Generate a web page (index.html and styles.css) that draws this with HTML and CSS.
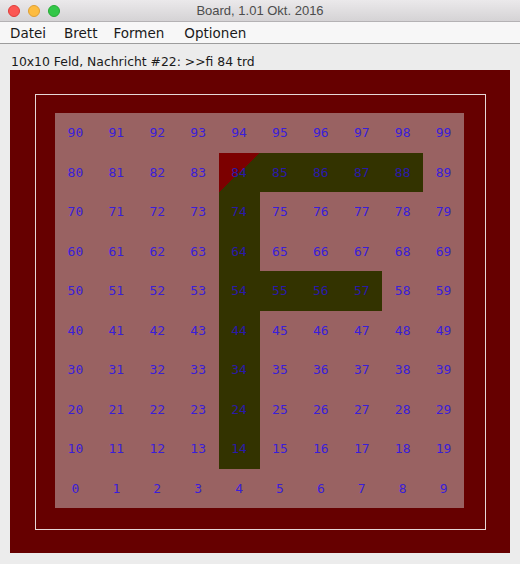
FILE: index.html
```html
<!DOCTYPE html>
<html>
<head>
<meta charset="utf-8">
<link rel="stylesheet" href="styles.css">
</head>
<body>
<div class="window">
  <div class="titlebar">
    <div class="lights">
      <span class="light red"></span>
      <span class="light yellow"></span>
      <span class="light green"></span>
    </div>
    <div class="title">Board, 1.01 Okt. 2016</div>
  </div>
  <div class="menubar">
    <span class="menu m1">Datei</span>
    <span class="menu m2">Brett</span>
    <span class="menu m3">Formen</span>
    <span class="menu m4">Optionen</span>
  </div>
  <div class="content">
    <div class="status">10x10 Feld, Nachricht #22: &gt;&gt;fi 84 trd</div>
    <div class="frame">
      <div class="outline">
        <div class="board" id="board"></div>
      </div>
    </div>
  </div>
</div>
<script src="app.js"></script>
</body>
</html>
```

FILE: app.js
```js
(function () {
  var board = document.getElementById('board');
  var dark = [84, 85, 86, 87, 88, 74, 64, 54, 44, 34, 24, 14, 55, 56, 57];
  for (var r = 9; r >= 0; r--) {
    for (var c = 0; c < 10; c++) {
      var n = r * 10 + c;
      var d = document.createElement('div');
      d.className = 'cell';
      if (dark.indexOf(n) >= 0) d.className += ' dark';
      if (n === 84) d.className += ' marked';
      d.textContent = n;
      board.appendChild(d);
    }
  }
})();
```

FILE: styles.css
```css
html, body {
  margin: 0;
  padding: 0;
}
body {
  width: 520px;
  height: 564px;
  overflow: hidden;
  background: #ececec;
}
.window {
  width: 520px;
  height: 564px;
  display: flex;
  flex-direction: column;
  background: #ececec;
}
.titlebar {
  height: 22px;
  box-sizing: border-box;
  background: linear-gradient(#ebe9eb, #d5d3d5);
  border-bottom: 1px solid #b4b2b4;
  display: flex;
  align-items: center;
  position: relative;
}
.lights {
  display: flex;
  gap: 8px;
  padding-left: 8px;
}
.light {
  width: 12px;
  height: 12px;
  border-radius: 50%;
  box-sizing: border-box;
}
.red { background: #fc5753; border: 1px solid #df3d39; }
.yellow { background: #fdbc40; border: 1px solid #de9f34; }
.green { background: #33c748; border: 1px solid #27aa35; }
.title {
  position: absolute;
  left: 0;
  right: 0;
  top: 3px;
  text-align: center;
  font-family: "Liberation Sans", Arial, sans-serif;
  font-size: 13px;
  line-height: 16px;
  color: #4c4c4c;
}
.menubar {
  height: 22px;
  box-sizing: border-box;
  background: #f7f7f7;
  border-bottom: 1px solid #9c9c9c;
  display: flex;
  align-items: center;
  font-family: "DejaVu Sans", sans-serif;
  font-size: 13.5px;
  color: #1a1a1a;
}
.menu { white-space: nowrap; }
.m1 { margin-left: 10px; }
.m2 { margin-left: 18px; }
.m3 { margin-left: 16px; }
.m4 { margin-left: 20px; }
.content {
  flex: 1;
  display: flex;
  flex-direction: column;
}
.status {
  height: 26px;
  box-sizing: border-box;
  padding: 10px 0 0 11px;
  font-family: "DejaVu Sans", sans-serif;
  font-size: 12.4px;
  line-height: 16px;
  color: #1a1a1a;
  white-space: nowrap;
}
.frame {
  margin-left: 10px;
  width: 500px;
  height: 483px;
  box-sizing: border-box;
  background: #660000;
  padding: 24px 24px 23px 25px;
}
.outline {
  width: 451px;
  height: 436px;
  box-sizing: border-box;
  border: 1px solid #e6d6d6;
  padding: 18px 21px 21px 19px;
}
.board {
  width: 409px;
  height: 395px;
  background: #996262;
  display: grid;
  grid-template-columns: repeat(10, 1fr);
  grid-template-rows: repeat(10, 1fr);
}
.cell {
  display: flex;
  align-items: center;
  justify-content: center;
  font-family: "DejaVu Sans Mono", monospace;
  font-size: 13px;
  color: #3a1ed8;
}
.cell.dark {
  background: #333300;
  color: #2a1aa8;
}
.cell.marked {
  background: linear-gradient(to bottom right, #7c0000 50%, #333300 50%);
}
```
